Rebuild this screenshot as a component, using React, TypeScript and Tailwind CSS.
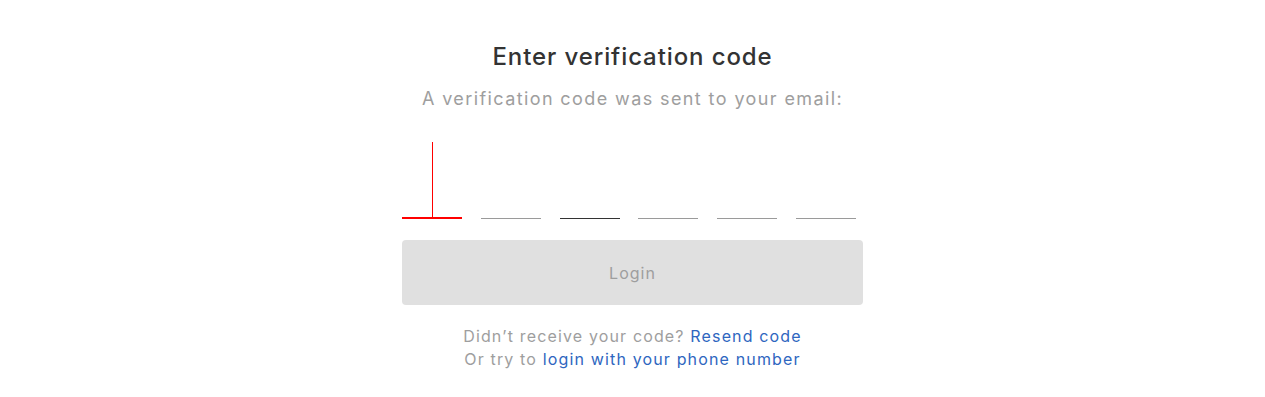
import React from "react";

const cells = [0, 1, 2, 3, 4, 5];

export default function App() {
  return (
    <div className="min-h-[397px] w-full bg-white font-['Inter','Noto_Sans',sans-serif]">
      <div className="mx-auto flex w-[461px] flex-col items-center pt-[39px] text-center">
        <h1 className="text-[24px] leading-[36px] font-medium tracking-[0.9px] text-[#333333]">
          Enter verification code
        </h1>
        <p className="mt-[10px] text-[18px] leading-[27px] tracking-[1.4px] text-[#9e9e9e]">
          A verification code was sent to your email:
        </p>

        <div className="mt-[30px] flex w-full items-end gap-[18.8px]">
          {cells.map((i) => (
            <div
              key={i}
              className={
                i === 0
                  ? "relative flex h-[77px] w-[60px] justify-center border-b-2 border-[#ff0000]"
                  : i === 2
                  ? "h-[76px] w-[60px] border-b border-[#333333]"
                  : "h-[76px] w-[60px] border-b border-[#9a9a9a]"
              }
            >
              {i === 0 && <div className="h-full w-px bg-[#ff0000]" />}
            </div>
          ))}
        </div>

        <button
          disabled
          className="mt-[21px] h-[65px] w-full rounded-[4px] bg-[#e0e0e0] text-[16px] tracking-[1px] text-[#9e9e9e]"
        >
          Login
        </button>

        <div className="mt-[20px] text-[16px] leading-[23px] tracking-[1.15px] text-[#9e9e9e]">
          <p>
            Didn’t receive your code?{" "}
            <a className="text-[#2e66c0]">Resend code</a>
          </p>
          <p>
            Or try to <a className="text-[#2e66c0]">login with your phone number</a>
          </p>
        </div>
      </div>
    </div>
  );
}
